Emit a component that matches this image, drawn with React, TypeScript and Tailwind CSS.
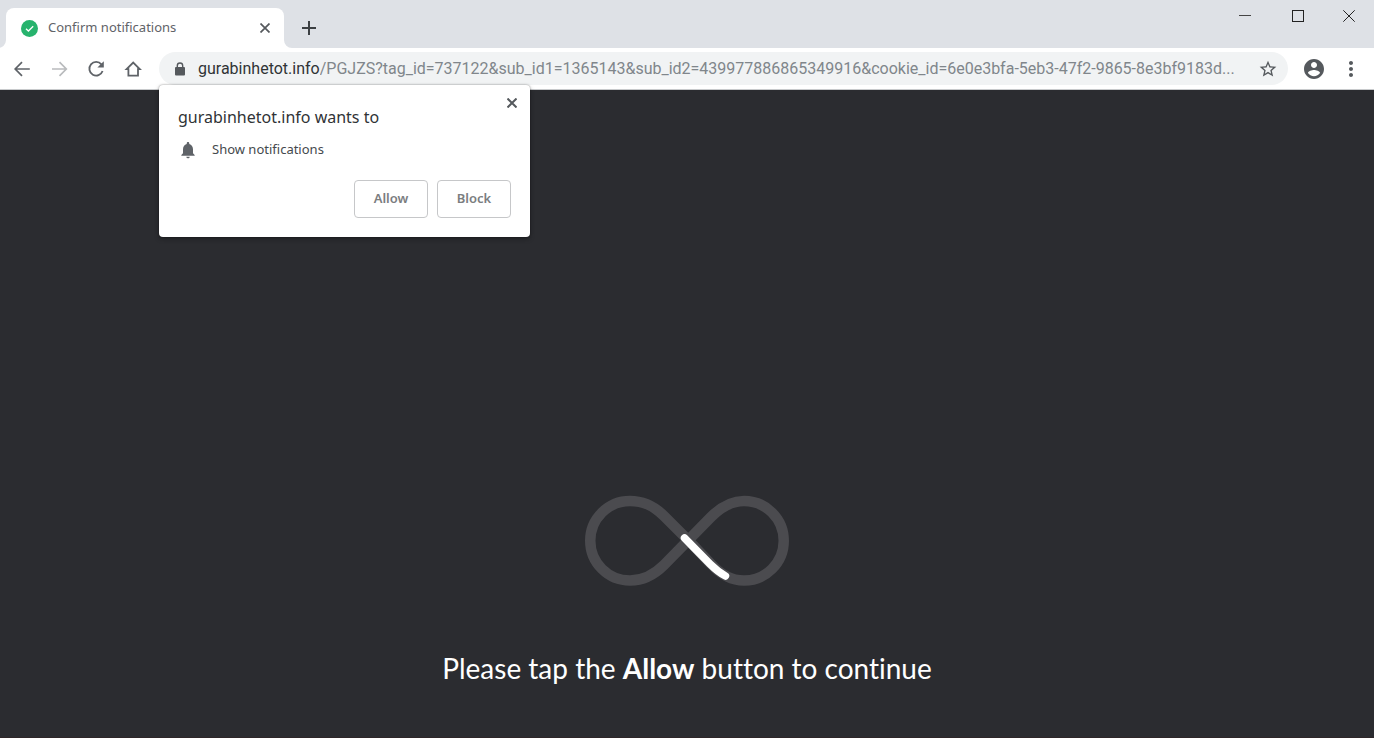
import { MdMoreVert, MdNotifications, MdStarBorder } from "react-icons/md"

const host = "gurabinhetot.info"
const path =
  "/PGJZS?tag_id=737122&sub_id1=1365143&sub_id2=439977886865349916&cookie_id=6e0e3bfa-5eb3-47f2-9865-8e3bf9183d..."

function TabStrip() {
  return (
    <header className="flex h-12 items-end bg-[#dee1e6] pl-1.5">
      <div className="relative flex h-10 w-[278px] items-center rounded-t-lg bg-white pl-[15px] pr-[11px]">
        <svg className="absolute bottom-0 -left-2 size-2" viewBox="0 0 8 8" fill="#fff">
          <path d="M8 0V8H0A8 8 0 0 0 8 0Z" />
        </svg>
        <svg className="absolute bottom-0 -right-2 size-2" viewBox="0 0 8 8" fill="#fff">
          <path d="M0 0V8H8A8 8 0 0 1 0 0Z" />
        </svg>
        <svg className="size-[17px]" viewBox="0 0 17 17" fill="none">
          <circle cx="8.5" cy="8.5" r="8.5" fill="#27b36d" />
          <path d="M5 8.7L7.4 11L12.2 6.2" stroke="#fff" strokeWidth="1.3" />
        </svg>
        <span className="ml-2.5 flex-1 text-[13px] text-[#5f6368]">Confirm notifications</span>
        <button aria-label="Close tab" className="flex size-4 items-center justify-center">
          <svg className="size-2.5" viewBox="0 0 10 10" stroke="#55595d" strokeWidth="1.7">
            <path d="M.5 .5L9.5 9.5M9.5 .5L.5 9.5" />
          </svg>
        </button>
      </div>

      <button aria-label="New tab" className="ml-[9px] flex size-8 items-center justify-center self-center pt-2">
        <svg className="size-3.5" viewBox="0 0 14 14" stroke="#3c4043" strokeWidth="2">
          <path d="M7 0V14M0 7H14" />
        </svg>
      </button>

      {/* Window controls */}
      <div className="ml-auto flex h-8 self-start">
        <button aria-label="Minimize" className="flex w-[53px] items-center justify-center">
          <svg className="size-3" viewBox="0 0 12 12" stroke="#444" shapeRendering="crispEdges">
            <path d="M0 5.5H12" />
          </svg>
        </button>
        <button aria-label="Maximize" className="flex w-[53px] items-center justify-center">
          <svg className="size-3" viewBox="0 0 12 12" stroke="#222" fill="none" shapeRendering="crispEdges">
            <rect x=".5" y=".5" width="11" height="11" />
          </svg>
        </button>
        <button aria-label="Close window" className="flex w-[50px] items-center justify-center">
          <svg className="size-3" viewBox="0 0 12 12" stroke="#222">
            <path d="M.3 .3L11.7 11.7M11.7 .3L.3 11.7" />
          </svg>
        </button>
      </div>
    </header>
  )
}

function PermissionPrompt() {
  return (
    <section
      aria-label="Permission request"
      className="absolute top-full left-0 z-10 h-[152px] w-[371px] rounded-sm bg-white px-[19px] pt-5 shadow-[0_0_2px_rgba(0,0,0,0.4),0_2px_5px_rgba(0,0,0,0.3)]"
    >
      <button aria-label="Close" className="absolute top-2.5 right-2.5 flex size-4 items-center justify-center">
        <svg className="size-2.5" viewBox="0 0 10 10" stroke="#55595d" strokeWidth="2">
          <path d="M.5 .5L9.5 9.5M9.5 .5L.5 9.5" />
        </svg>
      </button>
      <h2 className="text-base leading-6 text-[#303336]">{host} wants to</h2>
      <p className="mt-[11px] flex h-5 items-center gap-3.5 text-[13px] text-[#45494d]">
        <MdNotifications size={20} color="#5f6368" />
        Show notifications
      </p>
      <div className="mt-5 flex justify-end gap-[9px]">
        <button className="h-[38px] w-[74px] rounded border border-[#c6c7c9] text-[13px] font-semibold text-[#7b7d80]">
          Allow
        </button>
        <button className="h-[38px] w-[74px] rounded border border-[#c6c7c9] text-[13px] font-semibold text-[#7b7d80]">
          Block
        </button>
      </div>
    </section>
  )
}

function Toolbar() {
  return (
    <nav className="flex h-[42px] items-center border-b border-[#c8cacc] bg-white pl-3 pr-[11px]">
      <div className="flex w-[147px] gap-[17px]">
        <button aria-label="Back">
          <svg className="size-5" viewBox="0 0 20 20" fill="none" stroke="#5f6368" strokeWidth="1.7">
            <path d="M17.8 10H4M10 3.2L3.2 10L10 16.8" />
          </svg>
        </button>
        <button aria-label="Forward">
          <svg className="size-5" viewBox="0 0 20 20" fill="none" stroke="#b9bbbd" strokeWidth="1.7">
            <path d="M3 10H16.5M10.5 3.2L17.3 10L10.5 16.8" />
          </svg>
        </button>
        <button aria-label="Reload">
          <svg className="size-5" viewBox="0 0 20 20">
            <path d="M15.4 5.4A6.8 6.8 0 1 0 16.6 12" fill="none" stroke="#5f6368" strokeWidth="1.8" />
            <path d="M17.8 2.2V8.6H11.4Z" fill="#5f6368" />
          </svg>
        </button>
        <button aria-label="Home">
          <svg className="size-5" viewBox="0 0 20 20" fill="none" stroke="#5f6368" strokeWidth="1.8">
            <path d="M3.6 10.2H5.4V16.6H15V10.2H16.8L10.2 3.6Z" />
          </svg>
        </button>
      </div>

      <div className="relative flex h-[33px] min-w-0 flex-1 items-center rounded-full bg-[#f1f3f4] pl-[13px] pr-2.5">
        <svg className="size-4 shrink-0" viewBox="0 0 16 16" fill="none">
          <rect x="3" y="6" width="10" height="8.6" rx="1" fill="#55595d" />
          <path d="M5.3 6.5V4.7A2.7 2.7 0 0 1 10.7 4.7V6.5" stroke="#55595d" strokeWidth="1.4" />
        </svg>
        <label htmlFor="address" className="ml-2.5 font-['Roboto',sans-serif] text-base text-[#303336]">
          {host}
        </label>
        <input
          id="address"
          type="text"
          defaultValue={path}
          spellCheck={false}
          className="min-w-0 flex-1 bg-transparent font-['Roboto',sans-serif] text-base text-[#80868b] outline-none"
        />
        <button aria-label="Bookmark this page" className="ml-2">
          <MdStarBorder size={20} color="#55595d" />
        </button>
        <PermissionPrompt />
      </div>

      <button aria-label="Profile" className="ml-3.5">
        <svg className="size-6" viewBox="0 0 24 24" fill="#55595d">
          <path d="M12 2C6.48 2 2 6.48 2 12s4.48 10 10 10 10-4.48 10-10S17.52 2 12 2zm0 3c1.66 0 3 1.34 3 3s-1.34 3-3 3-3-1.34-3-3 1.34-3 3-3zm0 14.2c-2.5 0-4.71-1.28-6-3.22.03-1.99 4-3.08 6-3.08 1.99 0 5.97 1.09 6 3.08-1.29 1.94-3.5 3.22-6 3.22z" />
        </svg>
      </button>
      <button aria-label="Menu" className="ml-[13px]">
        <MdMoreVert size={24} color="#55595d" />
      </button>
    </nav>
  )
}

export default function App() {
  return (
    <div className="flex min-h-screen flex-col bg-[#2b2c30] font-['Noto_Sans',sans-serif]">
      <TabStrip />
      <Toolbar />
      <main className="flex flex-1 flex-col items-center justify-end border-b border-[#2e2628] pb-[49px]">
        <svg className="h-[92px] w-[204px]" viewBox="-1 0 204 92" fill="none" strokeLinecap="round">
          <path
            d="M102 45L78 21C67 10 57 6 44 6A39.5 39.5 0 0 0 44 85.5C57 85.5 67 81 78 70L125 22C136 11 146 6 158 6A39.7 39.7 0 0 1 158 85.5C146 85.5 136 81 125 69Z"
            stroke="#4b4b4f"
            strokeWidth="10.5"
          />
          <path d="M98.5 43L124 69C130 75 134 78 139.5 81" stroke="#fff" strokeWidth="7.5" />
        </svg>
        <p className="mt-[61px] font-['Lato',sans-serif] text-[28px] leading-10 text-white [font-variant-ligatures:none]">
          Please tap the <strong>Allow</strong> button to continue
        </p>
      </main>
    </div>
  )
}
